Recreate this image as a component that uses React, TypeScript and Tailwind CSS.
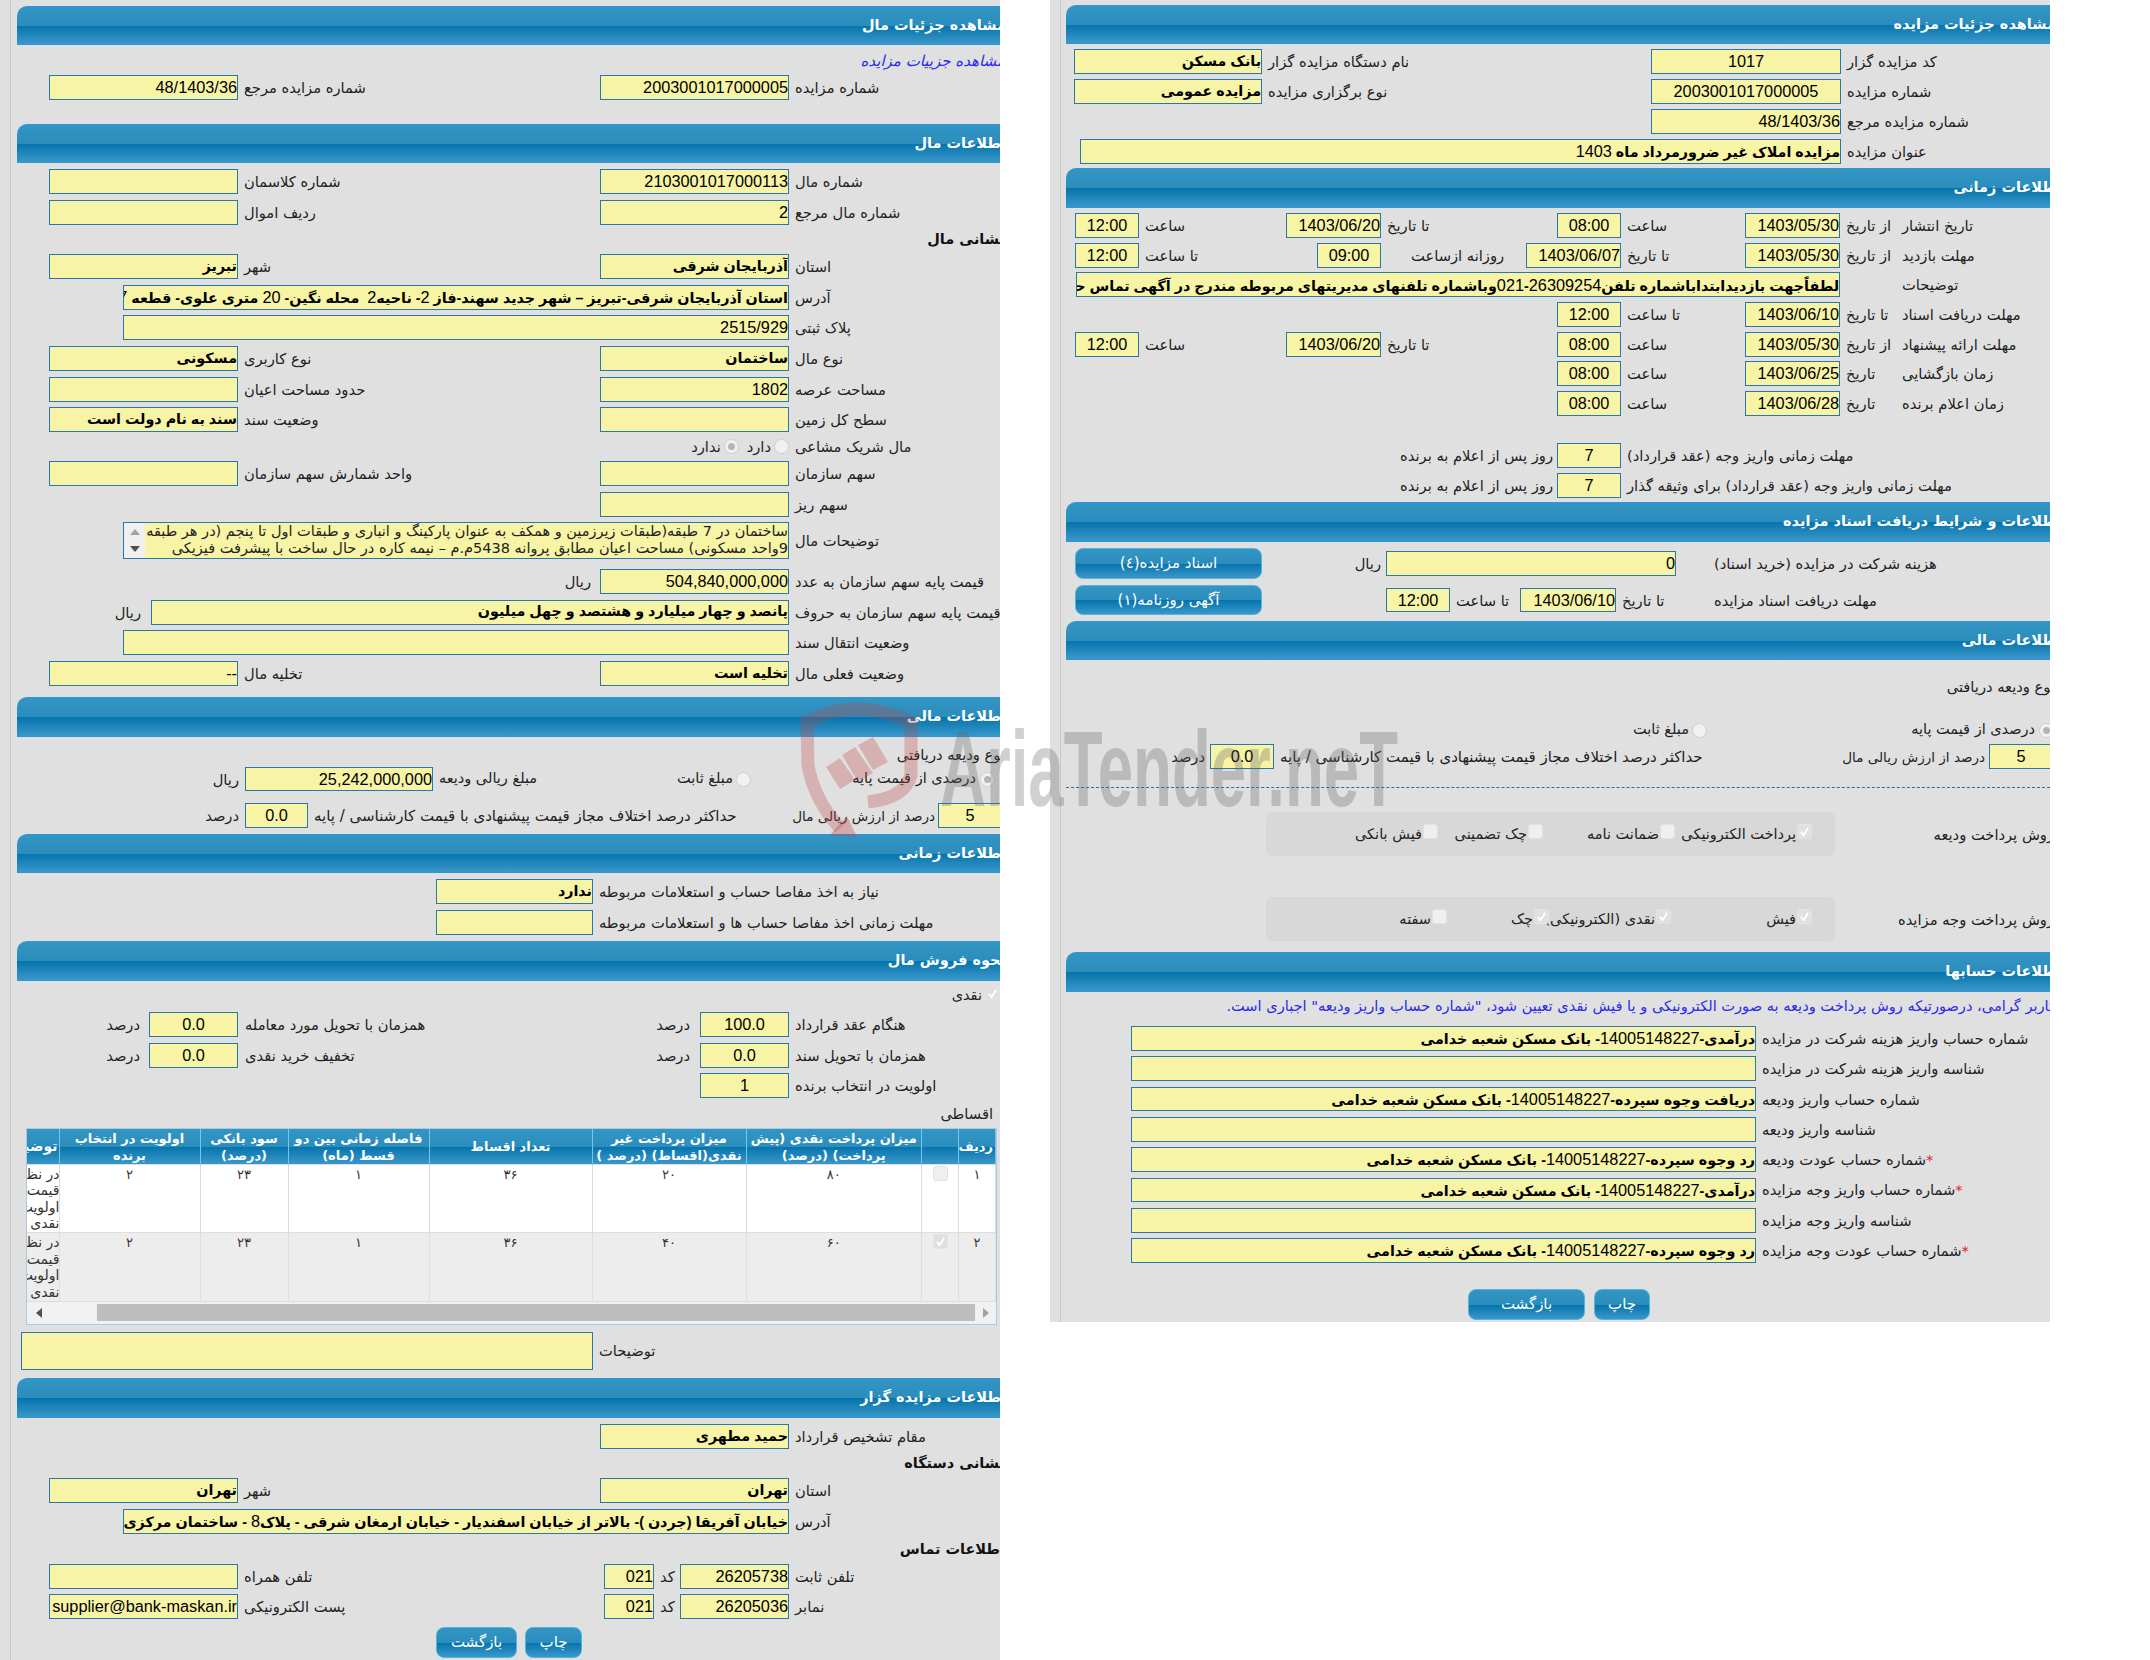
import type { ReactNode } from "react";

const BAR = "bg-[linear-gradient(#3295c3_0%,#2c8dbc_50%,#0574ad_51%,#3a97c9_100%)]";
const FIELD = "h-full shrink-0 border border-[#2a77ad] bg-[#f7f4a6] text-black [font-family:'Liberation_Sans','DejaVu_Sans',sans-serif]";

// label sits left aligned against the input beside it //
function L({ className = "", children }: { className?: string; children?: ReactNode }) {
  return (
    <div className={`flex shrink-0 items-center justify-end pt-[1px] pl-[6px] text-[14.7px] whitespace-nowrap text-[#222] ${className}`}>
      <span>{children}</span>
    </div>
  );
}

// text that just follows the input, no fixed column //
function T({ className = "", children }: { className?: string; children?: ReactNode }) {
  return <div className={`flex shrink-0 items-center pt-[1px] text-[14.7px] whitespace-nowrap text-[#222] ${className}`}>{children}</div>;
}

function F({ className = "", value = "", center, bold }: { className?: string; value?: string; center?: boolean; bold?: boolean }) {
  // persian values are heavier but their digits stay regular //
  if (bold) {
    return (
      <div dir="rtl" className={`flex items-center overflow-hidden text-[14.3px] font-bold whitespace-pre ${FIELD} ${className}`}>
        <span className="shrink-0">
          {value.split(/(\d+)/).map((part, i) =>
            /\d/.test(part) ? <span key={i} className="text-[16.3px] font-normal">{part}</span> : part
          )}
        </span>
      </div>
    );
  }
  return (
    <input
      readOnly
      value={value}
      dir="rtl"
      className={`text-[16.3px] outline-none ${center ? "text-center" : "text-right"} ${FIELD} ${className}`}
    />
  );
}

function Row({ className = "", children }: { className?: string; children?: ReactNode }) {
  return <div className={`flex h-[25px] shrink-0 ${className}`}>{children}</div>;
}

function Header({ className = "", title, clip = "-mr-[6px]" }: { className?: string; title: string; clip?: string }) {
  return (
    <div className={`flex h-[39px] shrink-0 items-center rounded-tl-[10px] border-y border-[#2f96d8] text-[14.5px] font-bold whitespace-nowrap text-white ${BAR} ${className}`}>
      <span className={clip}>{title}</span>
    </div>
  );
}

function Bold({ className = "", children }: { className?: string; children?: ReactNode }) {
  return <div className={`flex h-[20px] shrink-0 items-center text-[14.5px] font-bold whitespace-nowrap text-[#111] ${className}`}><span className="-mr-[5px]">{children}</span></div>;
}

function Radio({ on }: { on?: boolean }) {
  return (
    <span className="flex h-[15px] w-[15px] shrink-0 items-center justify-center rounded-full border border-[#cfcfcf] bg-[#f1f1f1]">
      {on && <span className="h-[7px] w-[7px] rounded-full bg-[#b5b5b5]" />}
    </span>
  );
}

function Check({ on, className = "" }: { on?: boolean; className?: string }) {
  return (
    <span className={`flex h-[15px] w-[15px] shrink-0 items-center justify-center rounded-[3px] border ${on ? "border-[#e4e4e4] bg-[#e0e0e0]" : "border-[#e2e2e2] bg-[#efefef]"} ${className}`}>
      {on && (
        <svg viewBox="0 0 12 12" className="h-[11px] w-[11px]">
          <path d="M2 6.5 L5 10 L10 2" fill="none" stroke="#fff" strokeWidth="2" />
        </svg>
      )}
    </span>
  );
}

function Btn({ className = "", children }: { className?: string; children: ReactNode }) {
  return (
    <button className={`flex shrink-0 items-center justify-center rounded-[8px] border border-[#53b4dc] text-[15px] text-white ${BAR} ${className}`}>
      {children}
    </button>
  );
}

function Item({ className = "", on, text }: { className?: string; on?: boolean; text: string }) {
  return (
    <div className={`flex shrink-0 items-center gap-[1px] text-[14.5px] whitespace-nowrap text-[#222] ${className}`}>
      <Check on={on} className="-mt-[6px]" />
      <span className="pt-[2px]">{text}</span>
    </div>
  );
}

const th = `border-x border-[#7ac4e6] px-[2px] text-center align-middle text-[13px] leading-[17px] font-bold text-white ${BAR}`;
const td = "border border-[#dedede] pt-[1px] text-center align-top text-[13px] leading-[17px] text-[#333]";

const installments = [
  { n: "۱", on: false, cash: "۸۰", rest: "۲۰", bg: "bg-white" },
  { n: "۲", on: true, cash: "۶۰", rest: "۴۰", bg: "bg-[#ededed]" },
];

function LeftPanel() {
  return (
    <div className="h-[1660px] w-[1000px] shrink-0 overflow-hidden bg-[#e0e0e0] pl-[10px]">
      <div dir="rtl" className="flex h-full flex-col border-l border-[#c8c8c8] [font-family:'DejaVu_Sans',sans-serif]">
        <Header title="مشاهده جزئیات مال" className="mt-[6px] ml-[6px]" />
        <div className="mt-[6px] flex h-[20px] shrink-0 items-center text-[15px] whitespace-nowrap text-[#2a2aee] italic"><span className="-mr-[5px]">مشاهده جزییات مزایده</span></div>
        <Row className="mt-[4px]">
          <L className="w-[211px]">شماره مزایده</L><F className="w-[189px]" value="2003001017000005" />
          <L className="w-[362px]">شماره مزایده مرجع</L><F className="w-[189px]" value="48/1403/36" />
        </Row>

        <Header title="اطلاعات مال" className="mt-[24px] ml-[6px]" />
        <div className="mt-[6px] flex flex-col gap-[6px]">
          <Row>
            <L className="w-[211px]">شماره مال</L><F className="w-[189px]" value="2103001017000113" />
            <L className="w-[362px]">شماره کلاسمان</L><F className="w-[189px]" />
          </Row>
          <Row>
            <L className="w-[211px]">شماره مال مرجع</L><F className="w-[189px]" value="2" />
            <L className="w-[362px]">ردیف اموال</L><F className="w-[189px]" />
          </Row>
        </div>
        <Bold className="mt-[5px]">نشانی مال</Bold>
        <div className="mt-[4px] flex flex-col gap-[5.7px]">
          <Row>
            <L className="w-[211px]">استان</L><F bold className="w-[189px]" value="آذربایجان شرقی" />
            <L className="w-[362px]">شهر</L><F bold className="w-[189px]" value="تبریز" />
          </Row>
          <Row><L className="w-[211px]">آدرس</L><F bold className="w-[666px]" value="استان آذربایجان شرقی-تبریز – شهر جدید سهند-فاز 2- ناحیه2  محله نگین- 20 متری علوی- قطعه 7" /></Row>
          <Row><L className="w-[211px]">پلاک ثبتی</L><F className="w-[666px]" value="2515/929" /></Row>
          <Row>
            <L className="w-[211px]">نوع مال</L><F bold className="w-[189px]" value="ساختمان" />
            <L className="w-[362px]">نوع کاربری</L><F bold className="w-[189px]" value="مسکونی" />
          </Row>
          <Row>
            <L className="w-[211px]">مساحت عرصه</L><F className="w-[189px]" value="1802" />
            <L className="w-[362px]">حدود مساحت اعیان</L><F className="w-[189px]" />
          </Row>
          <Row>
            <L className="w-[211px]">سطح کل زمین</L><F className="w-[189px]" />
            <L className="w-[362px]">وضعیت سند</L><F bold className="w-[189px]" value="سند به نام دولت است" />
          </Row>
          <div className="flex h-[17.5px] shrink-0 items-center">
            <L className="w-[211px]">مال شریک مشاعی</L>
            <Radio /><T className="mr-[3px]">دارد</T>
            <span className="mr-[8px]"><Radio on /></span><T className="mr-[3px]">ندارد</T>
          </div>
          <Row>
            <L className="w-[211px]">سهم سازمان</L><F className="w-[189px]" />
            <L className="w-[362px]">واحد شمارش سهم سازمان</L><F className="w-[189px]" />
          </Row>
          <Row><L className="w-[211px]">سهم ریز</L><F className="w-[189px]" /></Row>
        </div>
        <div className="mt-[5px] flex h-[37px] shrink-0">
          <L className="w-[211px]">توضیحات مال</L>
          <div className="flex w-[666px] shrink-0 overflow-hidden border border-[#2a77ad] bg-[#f7f4a6]">
            <div className="min-w-0 flex-1 overflow-hidden text-[14.5px] leading-[17px] whitespace-nowrap text-[#222]">
              <div>ساختمان در 7 طبقه(طبقات زیرزمین و همکف به عنوان پارکینگ و انباری و طبقات اول تا پنجم (در هر طبقه</div>
              <div>9واحد مسکونی) مساحت اعیان مطابق پروانه 5438م.م – نیمه کاره در حال ساخت با پیشرفت فیزیکی</div>
            </div>
            <div className="flex w-[21px] shrink-0 flex-col items-center justify-between bg-[#f0f0f0] py-[6px]">
              <span className="h-0 w-0 border-x-[5px] border-b-[6px] border-x-transparent border-b-[#a3a3a3]" />
              <span className="h-0 w-0 border-x-[5px] border-t-[6px] border-x-transparent border-t-[#505050]" />
            </div>
          </div>
        </div>
        <div className="mt-[10px] flex flex-col gap-[5.7px]">
          <Row><L className="w-[211px]">قیمت پایه سهم سازمان به عدد</L><F className="w-[189px]" value="504,840,000,000" /><T className="mr-[9px]">ریال</T></Row>
          <Row><L className="w-[211px]">قیمت پایه سهم سازمان به حروف</L><F bold className="w-[638px]" value="پانصد و چهار میلیارد و هشتصد و چهل میلیون" /><T className="mr-[10px]">ریال</T></Row>
          <Row><L className="w-[211px]">وضعیت انتقال سند</L><F className="w-[666px]" /></Row>
          <Row>
            <L className="w-[211px]">وضعیت فعلی مال</L><F bold className="w-[189px]" value="تخلیه است" />
            <L className="w-[362px]">تخلیه مال</L><F className="w-[189px]" value="--" />
          </Row>
        </div>

        <Header title="اطلاعات مالی" className="mt-[11px] ml-[6px] !h-[40px]" />
        <T className="mt-[7px] h-[20px]"><span className="-mr-[5px]">نوع ودیعه دریافتی</span></T>
        <Row className="mt-[3px] !h-[24px]">
          <div className="flex w-[249px] shrink-0 items-center gap-[4px] pr-[5px] text-[14.5px] text-[#222]"><Radio on /><span>درصدی از قیمت پایه</span></div>
          <div className="flex w-[318px] shrink-0 items-center justify-between pl-[6px] text-[14.5px] text-[#222]">
            <span className="flex items-center gap-[3px]"><Radio /><span>مبلغ ثابت</span></span>
            <span>مبلغ ریالی ودیعه</span>
          </div>
          <F className="w-[188px]" value="25,242,000,000" /><T className="mr-[6px]">ریال</T>
        </Row>
        <Row className="mt-[12px]">
          <F center className="-mr-[2px] w-[64px]" value="5" />
          <T className="w-[195px] pr-[3px] !text-[13.5px]">درصد از ارزش ریالی مال</T>
          <L className="w-[435px] !text-[15px]">حداکثر درصد اختلاف مجاز قیمت پیشنهادی با قیمت کارشناسی / پایه</L>
          <F center className="w-[63px]" value="0.0" /><T className="mr-[6px]">درصد</T>
        </Row>

        <Header title="اطلاعات زمانی" className="mt-[6px] ml-[6px]" />
        <div className="mt-[6px] flex flex-col gap-[6px]">
          <Row><L className="w-[407px]">نیاز به اخذ مفاصا حساب و استعلامات مربوطه</L><F bold className="w-[157px]" value="ندارد" /></Row>
          <Row><L className="w-[407px]">مهلت زمانی اخذ مفاصا حساب ها و استعلامات مربوطه</L><F className="w-[157px]" /></Row>
        </div>

        <Header title="نحوه فروش مال" className="mt-[6px] ml-[6px] !h-[40px]" />
        <div className="mt-[5px] flex h-[20px] shrink-0 items-center gap-[3px] text-[14.5px] text-[#222]"><Check on className="-mt-[6px]" /><span>نقدی</span></div>
        <div className="mt-[6px] flex flex-col gap-[5.7px]">
          <Row>
            <L className="w-[211px]">هنگام عقد قرارداد</L><F center className="w-[89px]" value="100.0" />
            <div className="flex w-[462px] shrink-0 items-center justify-between pt-[1px] pr-[10px] pl-[7px] text-[14.7px] text-[#222]"><span>درصد</span><span>همزمان با تحویل مورد معامله</span></div>
            <F center className="w-[89px]" value="0.0" /><T className="mr-[9px]">درصد</T>
          </Row>
          <Row>
            <L className="w-[211px]">همزمان با تحویل سند</L><F center className="w-[89px]" value="0.0" />
            <div className="flex w-[462px] shrink-0 items-center justify-between pt-[1px] pr-[10px] pl-[7px] text-[14.7px] text-[#222]"><span>درصد</span><span>تخفیف خرید نقدی</span></div>
            <F center className="w-[89px]" value="0.0" /><T className="mr-[9px]">درصد</T>
          </Row>
          <Row><L className="w-[211px]">اولویت در انتخاب برنده</L><F center className="w-[89px]" value="1" /></Row>
        </div>
        <T className="mt-[5px] h-[20px] pr-[7px]">اقساطی</T>

        <div className="mt-[5px] mr-[3px] w-[971px] shrink-0 overflow-hidden border border-[#a5cbe6]">
          <table className="w-[969px] table-fixed border-collapse">
            <colgroup>
              <col className="w-[37px]" /><col className="w-[37px]" /><col className="w-[175.5px]" /><col className="w-[154px]" />
              <col className="w-[163px]" /><col className="w-[141px]" /><col className="w-[88px]" /><col className="w-[141px]" /><col className="w-[32.5px]" />
            </colgroup>
            <thead>
              <tr className="h-[35px]">
                <th className={th}>ردیف</th>
                <th className={th}></th>
                <th className={th}>میزان پرداخت نقدی (پیش پرداخت) (درصد)</th>
                <th className={th}>میزان پرداخت غیر نقدی(اقساط) (درصد )</th>
                <th className={th}>تعداد اقساط</th>
                <th className={th}>فاصله زمانی بین دو قسط (ماه)</th>
                <th className={th}>سود بانکی (درصد)</th>
                <th className={th}>اولویت در انتخاب برنده</th>
                <th className={`${th} overflow-hidden !text-right !text-[14px] whitespace-nowrap`}>توضیحات</th>
              </tr>
            </thead>
            <tbody>
              {installments.map((r) => (
                <tr key={r.n} className={`h-[68.5px] ${r.bg}`}>
                  <td className={td}>{r.n}</td>
                  <td className={td}><span className="flex justify-center"><Check on={r.on} /></span></td>
                  <td className={td}>{r.cash}</td>
                  <td className={td}>{r.rest}</td>
                  <td className={td}>۳۶</td>
                  <td className={td}>۱</td>
                  <td className={td}>۲۳</td>
                  <td className={td}>۲</td>
                  <td className={`${td} overflow-hidden !text-right !text-[14px] !leading-[16.5px] whitespace-nowrap`}>
                    <div>در نظر</div><div>قیمت پایه</div><div>اولویت</div><div>نقدی</div>
                  </td>
                </tr>
              ))}
            </tbody>
          </table>
          <div dir="ltr" className="flex h-[22px] items-center bg-[#f1f1f1]">
            <div className="flex w-[70px] shrink-0 pl-[9px]"><span className="h-0 w-0 border-y-[5px] border-r-[6px] border-y-transparent border-r-[#505050]" /></div>
            <div className="h-[17px] flex-1 bg-[#bebebe]" />
            <div className="flex w-[21px] shrink-0 justify-center"><span className="h-0 w-0 border-y-[5px] border-l-[6px] border-y-transparent border-l-[#a3a3a3]" /></div>
          </div>
        </div>

        <div className="mt-[7px] flex h-[38px] shrink-0">
          <L className="w-[407px]">توضیحات</L><F className="w-[572px]" />
        </div>

        <Header title="اطلاعات مزایده گزار" className="mt-[8px] ml-[6px] !h-[40px]" />
        <Row className="mt-[6px]"><L className="w-[211px]">مقام تشخیص قرارداد</L><F bold className="w-[189px]" value="حمید مطهری" /></Row>
        <Bold className="mt-[5px]">نشانی دستگاه</Bold>
        <div className="mt-[4px] flex flex-col gap-[6px]">
          <Row>
            <L className="w-[211px]">استان</L><F bold className="w-[189px]" value="تهران" />
            <L className="w-[362px]">شهر</L><F bold className="w-[189px]" value="تهران" />
          </Row>
          <Row><L className="w-[211px]">آدرس</L><F bold className="w-[666px]" value="خیابان آفریقا (جردن )- بالاتر از خیابان اسفندیار - خیابان ارمغان شرقی - پلاک8 - ساختمان مرکزی" /></Row>
        </div>
        <Bold className="mt-[6px]">اطلاعات تماس</Bold>
        <div className="mt-[4px] flex flex-col gap-[5px]">
          <Row>
            <L className="w-[211px]">تلفن ثابت</L><F className="w-[109px]" value="26205738" />
            <L className="w-[26px]">کد</L><F className="w-[50px]" value="021" />
            <L className="w-[366px]">تلفن همراه</L><F className="w-[189px]" />
          </Row>
          <Row>
            <L className="w-[211px]">نمابر</L><F className="w-[109px]" value="26205036" />
            <L className="w-[26px]">کد</L><F className="w-[50px]" value="021" />
            <L className="w-[366px]">پست الکترونیکی</L><F className="w-[189px]" value="supplier@bank-maskan.ir" />
          </Row>
        </div>
        <div className="mt-[8px] mr-[418px] flex h-[31px] shrink-0 gap-[8px]">
          <Btn className="w-[57px]">چاپ</Btn>
          <Btn className="w-[81px]">بازگشت</Btn>
        </div>
      </div>
    </div>
  );
}

function RightPanel() {
  const dateRow = (title: string, a: string, date: string, b: string, time: string) => (
    <>
      <L className="w-[148px] !pl-0">{title}</L>
      <L className="w-[62px]">{a}</L>
      <F className="w-[95px]" value={date} />
      <L className="w-[124px]">{b}</L>
      <F center className="w-[64px]" value={time} />
    </>
  );
  return (
    <div className="h-[1322px] w-[1000px] shrink-0 overflow-hidden bg-[#e0e0e0] pl-[10px]">
      <div dir="rtl" className="flex h-full flex-col border-l border-[#c8c8c8] [font-family:'DejaVu_Sans',sans-serif]">
        <Header title="مشاهده جزئیات مزایده" className="mt-[5px] ml-[5px]" />
        <div className="mt-[5px] flex flex-col gap-[5px]">
          <Row>
            <L className="w-[209px]">کد مزایده گزار</L><F center className="w-[190px]" value="1017" />
            <L className="w-[389px]">نام دستگاه مزایده گزار</L><F bold className="w-[188px]" value="بانک مسکن" />
          </Row>
          <Row>
            <L className="w-[209px]">شماره مزایده</L><F center className="w-[190px]" value="2003001017000005" />
            <L className="w-[389px]">نوع برگزاری مزایده</L><F bold className="w-[188px]" value="مزایده عمومی" />
          </Row>
          <Row><L className="w-[209px]">شماره مزایده مرجع</L><F className="w-[190px]" value="48/1403/36" /></Row>
          <Row><L className="w-[209px]">عنوان مزایده</L><F bold className="w-[761px]" value="مزایده املاک غیر ضرورمرداد ماه 1403" /></Row>
        </div>

        <Header title="اطلاعات زمانی" clip="-mr-[11px]" className="mt-[4px] ml-[5px] !h-[40px]" />
        <div className="mt-[5px] flex flex-col gap-[4.7px]">
          <Row>
            {dateRow("تاریخ انتشار", "از تاریخ", "1403/05/30", "ساعت", "08:00")}
            <L className="w-[176px]">تا تاریخ</L><F className="w-[95px]" value="1403/06/20" />
            <L className="w-[147px]">ساعت</L><F center className="w-[64px]" value="12:00" />
          </Row>
          <Row>
            <L className="w-[148px] !pl-0">مهلت بازدید</L>
            <L className="w-[62px]">از تاریخ</L>
            <F className="w-[95px]" value="1403/05/30" />
            <L className="w-[124px]">تا تاریخ</L>
            <F className="w-[95px]" value="1403/06/07" />
            <L className="w-[145px] !pl-[30px]">روزانه ازساعت</L>
            <F center className="w-[64px]" value="09:00" />
            <L className="w-[178px]">تا ساعت</L>
            <F center className="w-[64px]" value="12:00" />
          </Row>
          <Row>
            <L className="w-[148px] !pl-0">توضیحات</L><div className="w-[62px] shrink-0" />
            <F bold className="w-[764px]" value="لطفاًجهت بازدیدابتداباشماره تلفن26309254-021وباشماره تلفنهای مدیریتهای مربوطه مندرج در آگهی تماس حاصل فرمایید" />
          </Row>
          <Row>{dateRow("مهلت دریافت اسناد", "تا تاریخ", "1403/06/10", "تا ساعت", "12:00")}</Row>
          <Row>
            {dateRow("مهلت ارائه پیشنهاد", "از تاریخ", "1403/05/30", "ساعت", "08:00")}
            <L className="w-[176px]">تا تاریخ</L><F className="w-[95px]" value="1403/06/20" />
            <L className="w-[147px]">ساعت</L><F center className="w-[64px]" value="12:00" />
          </Row>
          <Row>{dateRow("زمان بازگشایی", "تاریخ", "1403/06/25", "ساعت", "08:00")}</Row>
          <Row>{dateRow("زمان اعلام برنده", "تاریخ", "1403/06/28", "ساعت", "08:00")}</Row>
        </div>
        <div className="mt-[27px] flex flex-col gap-[5px]">
          <Row><L className="w-[429px]">مهلت زمانی واریز وجه (عقد قرارداد)</L><F center className="w-[64px]" value="7" /><T className="mr-[4px]">روز پس از اعلام به برنده</T></Row>
          <Row><L className="w-[429px]">مهلت زمانی واریز وجه (عقد قرارداد) برای وثیقه گذار</L><F center className="w-[64px]" value="7" /><T className="mr-[4px]">روز پس از اعلام به برنده</T></Row>
        </div>

        <Header title="اطلاعات و شرایط دریافت اسناد مزایده" clip="-mr-[11px]" className="mt-[4px] ml-[5px] !h-[40px]" />
        <div className="mt-[6px] flex h-[31px] shrink-0 items-center">
          <L className="w-[336px] !pl-0">هزینه شرکت در مزایده (خرید اسناد)</L>
          <div className="mr-[38px] h-[25px] w-[290px] shrink-0"><F className="w-full" value="0" /></div>
          <T className="mr-[5px]">ریال</T>
          <Btn className="mr-auto ml-[14px] h-full w-[187px]">اسناد مزایده(٤)</Btn>
        </div>
        <div className="mt-[6px] flex h-[30px] shrink-0 items-center">
          <L className="w-[336px] !pl-0">مهلت دریافت اسناد مزایده</L>
          <L className="w-[98px]">تا تاریخ</L>
          <div className="h-[24px] w-[96px] shrink-0"><F className="w-full" value="1403/06/10" /></div>
          <L className="w-[70px]">تا ساعت</L>
          <div className="h-[24px] w-[64px] shrink-0"><F center className="w-full" value="12:00" /></div>
          <Btn className="mr-auto ml-[14px] h-full w-[187px]">آگهی روزنامه(١)</Btn>
        </div>

        <Header title="اطلاعات مالی" clip="-mr-[11px]" className="mt-[6px] ml-[5px]" />
        <T className="mt-[16px] h-[20px]"><span className="-mr-[5px]">نوع ودیعه دریافتی</span></T>
        <div className="mt-[24px] flex h-[20px] shrink-0 items-center text-[14.5px] text-[#222]">
          <div className="-mr-[4px] flex w-[347px] shrink-0 items-center gap-[4px]"><Radio on /><span>درصدی از قیمت پایه</span></div>
          <div className="flex shrink-0 items-center gap-[3px]"><Radio /><span>مبلغ ثابت</span></div>
        </div>
        <Row className="mt-[4px]">
          <F center className="-mr-[3px] w-[64px]" value="5" />
          <T className="w-[281px] pr-[4px] !text-[13.5px]">درصد از ارزش ریالی مال</T>
          <L className="w-[434px] !text-[15px]">حداکثر درصد اختلاف مجاز قیمت پیشنهادی با قیمت کارشناسی / پایه</L>
          <F center className="w-[64px]" value="0.0" /><T className="mr-[5px]">درصد</T>
        </Row>
        <div className="mt-[18px] ml-[5px] h-0 shrink-0 border-t border-dashed border-[#2a6f98]" />

        <div className="mt-[24px] flex h-[44px] shrink-0 items-center">
          <T className="w-[215px]"><span className="-mr-[4px]">روش پرداخت ودیعه</span></T>
          <div className="flex h-full w-[569px] shrink-0 items-center rounded-[6px] bg-[#d8d8d8] pr-[23px]">
            <Item on text="پرداخت الکترونیکی" className="w-[137px]" />
            <Item text="ضمانت نامه" className="w-[132px]" />
            <Item text="چک تضمینی" className="w-[105px]" />
            <Item text="فیش بانکی" />
          </div>
        </div>
        <div className="mt-[41px] flex h-[44px] shrink-0 items-center">
          <T className="w-[215px]"><span className="-mr-[4px]">روش پرداخت وجه مزایده</span></T>
          <div className="flex h-full w-[569px] shrink-0 items-center rounded-[6px] bg-[#d8d8d8] pr-[23px]">
            <Item on text="فیش" className="w-[141px]" />
            <Item on text="نقدی (الکترونیکی)" className="w-[122px]" />
            <Item on text="چک" className="w-[102px]" />
            <Item text="سفته" />
          </div>
        </div>

        <Header title="اطلاعات حسابها" clip="-mr-[11px]" className="mt-[11px] ml-[5px] !h-[40px]" />
        <div className="mt-[4px] flex h-[20px] shrink-0 items-center text-[14.6px] whitespace-nowrap text-[#2a2aee]">
          <span className="-mr-[6px]">کاربر گرامی، درصورتیکه روش پرداخت ودیعه به صورت الکترونیکی و یا فیش نقدی تعیین شود، "شماره حساب واریز ودیعه" اجباری است.</span>
        </div>
        <div className="mt-[10px] flex flex-col gap-[5.6px]">
          <Row className="!h-[24.7px]"><L className="w-[294px]">شماره حساب واریز هزینه شرکت در مزایده</L><F bold className="w-[625px]" value="درآمدی-14005148227- بانک مسکن شعبه خدامی" /></Row>
          <Row className="!h-[24.7px]"><L className="w-[294px]">شناسه واریز هزینه شرکت در مزایده</L><F className="w-[625px]" /></Row>
          <Row className="!h-[24.7px]"><L className="w-[294px]">شماره حساب واریز ودیعه</L><F bold className="w-[625px]" value="دریافت وجوه سپرده-14005148227- بانک مسکن شعبه خدامی" /></Row>
          <Row className="!h-[24.7px]"><L className="w-[294px]">شناسه واریز ودیعه</L><F className="w-[625px]" /></Row>
          <Row className="!h-[24.7px]"><L className="w-[294px]"><b className="font-normal text-[#e02020]">*</b>شماره حساب عودت ودیعه</L><F bold className="w-[625px]" value="رد وجوه سپرده-14005148227- بانک مسکن شعبه خدامی" /></Row>
          <Row className="!h-[24.7px]"><L className="w-[294px]"><b className="font-normal text-[#e02020]">*</b>شماره حساب واریز وجه مزایده</L><F bold className="w-[625px]" value="درآمدی-14005148227- بانک مسکن شعبه خدامی" /></Row>
          <Row className="!h-[24.7px]"><L className="w-[294px]">شناسه واریز وجه مزایده</L><F className="w-[625px]" /></Row>
          <Row className="!h-[24.7px]"><L className="w-[294px]"><b className="font-normal text-[#e02020]">*</b>شماره حساب عودت وجه مزایده</L><F bold className="w-[625px]" value="رد وجوه سپرده-14005148227- بانک مسکن شعبه خدامی" /></Row>
        </div>
        <div className="mt-[26px] mr-[400px] flex h-[31px] shrink-0 gap-[9px]">
          <Btn className="w-[56px]">چاپ</Btn>
          <Btn className="w-[117px]">بازگشت</Btn>
        </div>
      </div>
    </div>
  );
}

function Watermark() {
  return (
    <svg className="pointer-events-none absolute top-0 left-0 h-[1660px] w-[2150px]" viewBox="0 0 2150 1660">
      <path d="M840 828 Q814 800 808 765 L807 722 Q855 696 911 722 L911 775 Q905 798 868 802" fill="none" stroke="rgba(190,70,70,0.3)" strokeWidth="13" />
      <path d="M830 835 L857 837 L847 816 Z" fill="rgba(190,70,70,0.35)" />
      <path d="M826 767 L840 758 L855 780 L840 789 Z M842 755 L855 747 L873 773 L858 782 Z M858 745 L873 737 L888 762 L873 770 Z" fill="rgba(190,70,70,0.3)" />
      <text x="940" y="806" fontFamily="Liberation Sans" fontWeight="bold" fontSize="108" textLength="458" lengthAdjust="spacingAndGlyphs" fill="rgba(100,100,100,0.3)">AriaTender.neT</text>
    </svg>
  );
}

export default function App() {
  return (
    <div className="relative flex h-[1660px] w-[2150px] items-start gap-[50px] overflow-hidden bg-white">
      <LeftPanel />
      <RightPanel />
      <Watermark />
    </div>
  );
}
